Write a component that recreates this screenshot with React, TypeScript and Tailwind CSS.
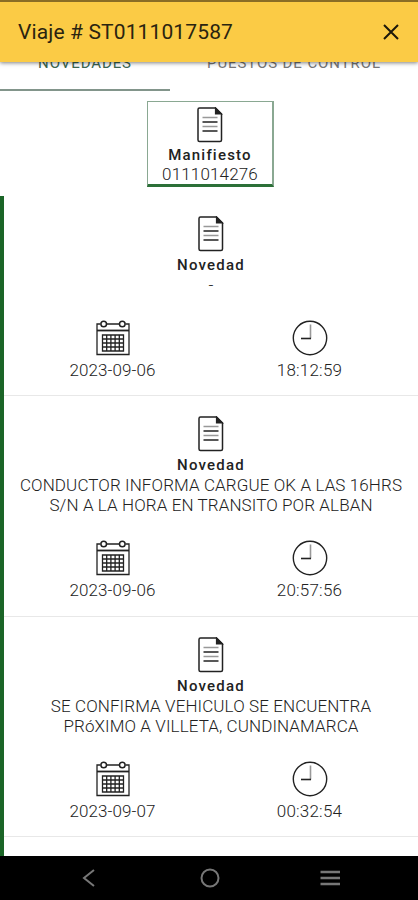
import React from "react";

const NOVEDADES = [
  { lines: ["-"], date: "2023-09-06", time: "18:12:59" },
  {
    lines: ["CONDUCTOR INFORMA CARGUE OK A LAS 16HRS", "S/N A LA HORA EN TRANSITO POR ALBAN"],
    date: "2023-09-06",
    time: "20:57:56",
  },
  {
    lines: ["SE CONFIRMA VEHICULO SE ENCUENTRA", "PRóXIMO A VILLETA, CUNDINAMARCA"],
    date: "2023-09-07",
    time: "00:32:54",
  },
];

function DocumentIcon() {
  return (
    <svg width="26" height="36" viewBox="0 0 26 36" fill="none" stroke="#222">
      <path d="M2.5 1h16l6 6v26a1.5 1.5 0 0 1-1.5 1.5H2.5A1.5 1.5 0 0 1 1 33V2.5A1.5 1.5 0 0 1 2.5 1z" strokeWidth="1.5" />
      <path d="M18.5 1v6h6z" fill="#222" strokeWidth="1.2" />
      <path d="M5.5 10.5h15M5.5 19.5h15" stroke="#999" strokeWidth="1.4" />
      <path d="M5.5 15h15M5.5 24h15" strokeWidth="1.5" />
    </svg>
  );
}

function CalendarIcon() {
  return (
    <svg width="34" height="36" viewBox="0 0 34 36" fill="none" stroke="#222">
      <path d="M4.5 4H1v30.5h32V4h-3.5M11 4h12" strokeWidth="1.3" />
      <path d="M1 10.5h32" strokeWidth="1.8" />
      <circle cx="7.7" cy="4" r="2.8" strokeWidth="1.5" />
      <circle cx="26.3" cy="4" r="2.8" strokeWidth="1.5" />
      <path
        d="M6.5 15h21v16h-21zM10.7 15v16M14.9 15v16M19.1 15v16M23.3 15v16M6.5 19h21M6.5 23h21M6.5 27h21"
        strokeWidth="1.3"
      />
    </svg>
  );
}

function ClockIcon() {
  return (
    <svg width="36" height="36" viewBox="0 0 36 36" fill="none" stroke="#222">
      <circle cx="18" cy="18" r="16.7" strokeWidth="1.4" />
      <path d="M18.5 4.5V18.5" stroke="#999" strokeWidth="1.6" />
      <path d="M19 18.5H9" strokeWidth="1.6" />
    </svg>
  );
}

function Novedad({ item }: { item: (typeof NOVEDADES)[number] }) {
  return (
    <div className="flex flex-col border-b border-[#e8e8e8] pt-5 pb-[15.3px]">
      <div className="flex flex-col items-center">
        <DocumentIcon />
        <h3 className="mt-[3px] text-[15px] leading-5 font-medium tracking-[1.2px] text-[#222]">Novedad</h3>
        {item.lines.map((line) => (
          <p key={line} className="text-[17px] leading-5 tracking-[0.1px] whitespace-nowrap">
            {line}
          </p>
        ))}
      </div>
      <div className="mt-[25px] grid grid-cols-2 pl-2.5 pr-2.5">
        <div className="flex flex-col items-center gap-1">
          <CalendarIcon />
          <span className="text-[17px] leading-5 tracking-[0.1px]">{item.date}</span>
        </div>
        <div className="flex flex-col items-center gap-1">
          <ClockIcon />
          <span className="text-[17px] leading-5 tracking-[0.2px]">{item.time}</span>
        </div>
      </div>
    </div>
  );
}

export default function App() {
  return (
    <div className="flex h-[900px] w-[418px] flex-col overflow-hidden bg-white font-['Roboto',sans-serif] font-light text-[#222]">
      <header className="relative z-10 flex h-[62px] shrink-0 items-center justify-between border-t-2 border-[#8a6d25] bg-[#fbcb45] pr-[18px] pl-[18px] shadow-[0_1px_4px_rgba(0,0,0,0.5)]">
        <h1 className="text-[21px] leading-7 font-normal tracking-[0.13px] text-[#2a2410]">Viaje # ST0111017587</h1>
        <svg width="18" height="18" viewBox="0 0 18 18" stroke="#1c180a" strokeWidth="2">
          <path d="M2 2l14 14M16 2L2 16" />
        </svg>
      </header>

      {/* Tabs scrolled partly under the header */}
      <nav className="-mt-5 flex h-[49px] shrink-0 text-[15px] font-normal">
        <div className="flex w-[170px] shrink-0 justify-center border-b-2 border-[#82958b] pt-[11px] text-[#3c6650]">
          <span className="leading-5 tracking-[0.9px]">NOVEDADES</span>
        </div>
        <div className="flex flex-1 justify-center pt-[11px] text-[#777]">
          <span className="leading-5 tracking-[0.9px]">PUESTOS DE CONTROL</span>
        </div>
      </nav>

      <section className="mt-[10px] ml-[147px] flex h-[86px] w-[127px] shrink-0 flex-col items-center border border-r-2 border-b-[3px] border-[#8aa892] border-b-[#2c7038] pt-[5px]">
        <DocumentIcon />
        <h2 className="mt-[2px] text-[15px] leading-5 font-medium tracking-[1.2px] text-[#222]">Manifiesto</h2>
        <p className="text-[17px] leading-[19px] tracking-[0.15px]">0111014276</p>
      </section>

      <main className="mt-[9px] flex-1 overflow-hidden border-l-4 border-[#1b6527]">
        {NOVEDADES.map((item) => (
          <Novedad key={item.time} item={item} />
        ))}
      </main>

      <footer className="flex h-11 shrink-0 items-center bg-black pl-[82px] text-[#777]">
        <svg width="260" height="20" viewBox="0 0 260 20" fill="none" stroke="currentColor" strokeWidth="2">
          <path d="M12 2L2 10l10 8" />
          <circle cx="128" cy="10" r="8.5" />
          <path d="M238.500 4h19.500M238.500 10h19.500M238.500 16h19.500" strokeWidth="2.500" />
        </svg>
      </footer>
    </div>
  );
}
